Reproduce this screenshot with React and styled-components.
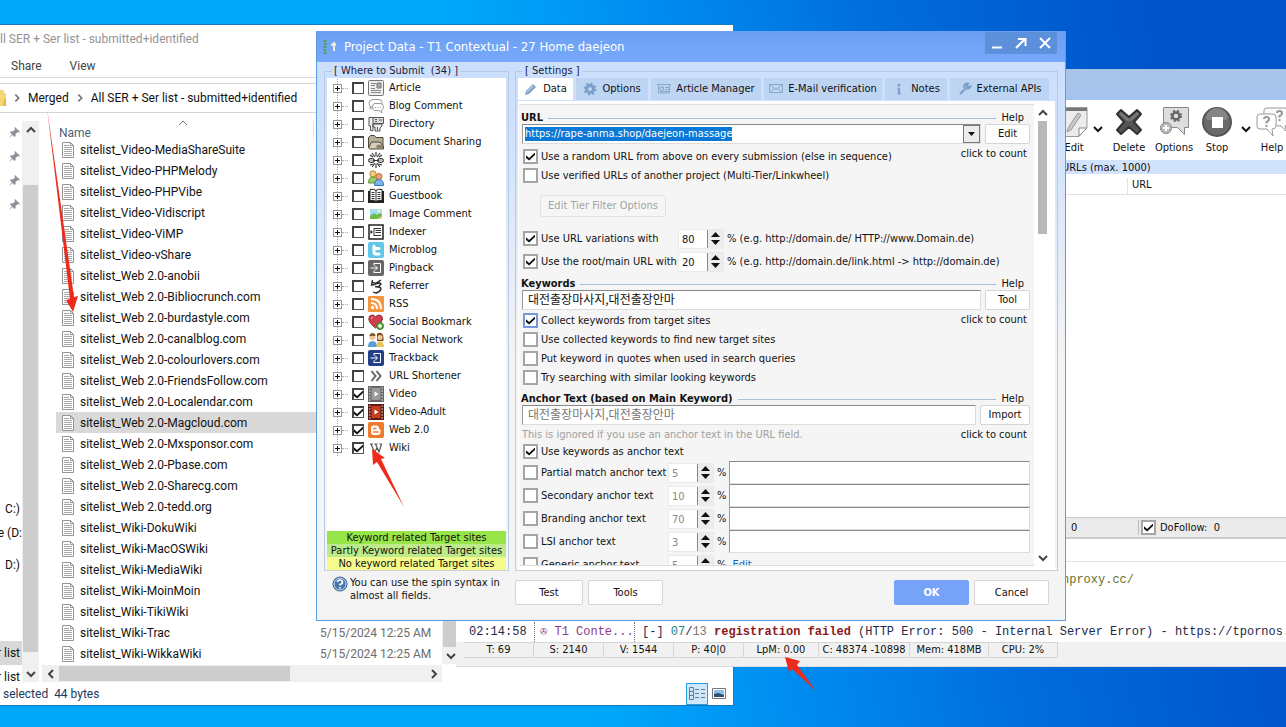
import React, { useEffect, useRef } from 'react';
import styled, { createGlobalStyle, css } from 'styled-components';

const tahoma = '"DejaVu Sans Condensed", "DejaVu Sans", "Noto Sans CJK KR", sans-serif';
const segoe = 'Roboto, "Noto Sans", sans-serif';
const mono = '"Liberation Mono", monospace';

const GlobalStyle = createGlobalStyle`
  * {
    box-sizing: border-box;
  }

  body {
    margin: 0;
    overflow: hidden;
    color: #111;
    font: 11px/14px ${tahoma};
  }

  button,
  input {
    margin: 0;
    padding: 0;
    font: inherit;
    color: inherit;
  }

  svg {
    display: block;
    flex: none;
  }
`;

const Desktop = styled.main`
  position: relative;
  height: 100vh;
  overflow: hidden;
  background: linear-gradient(78deg, #00a8fa 0%, #00a8fa 42%, #008cf0 56%, #006cdb 72%, #0052c8 92%);
`;

/* ---------- shared controls ---------- */

const Check = styled.input.attrs({ type: 'checkbox' })`
  appearance: none;
  flex: none;
  display: grid;
  place-items: center;
  width: ${({ $small }) => ($small ? 12 : 15)}px;
  height: ${({ $small }) => ($small ? 12 : 15)}px;
  background: white;
  border: ${({ $small }) => ($small ? '1px solid #555' : '2px solid #a5a5a5')};

  ${({ $small }) =>
    $small &&
    css`
      border-top: 2px solid #444;
      border-left: 2px solid #444;
    `}

  ${({ $active }) => $active && 'border-color: #7597dc;'}

  &:checked::after {
    content: '';
    width: 9px;
    height: 8px;
    background: #111;
    clip-path: polygon(0 35%, 35% 68%, 100% 0, 100% 32%, 35% 100%, 0 68%);
  }
`;

const Chevron = ({ dir = 'down', size = 12, color = '#444', weight = 2 }) => {
  const d = {
    down: 'M2 4l4 4 4-4',
    up: 'M2 8l4-4 4 4',
    left: 'M8 2L4 6l4 4',
    right: 'M4 2l4 4-4 4'
  }[dir];

  return (
    <svg width={size} height={size} viewBox="0 0 12 12" fill="none" stroke={color} strokeWidth={weight}>
      <path d={d} />
    </svg>
  );
};

const ScrollBar = styled.div`
  display: flex;
  flex-direction: ${({ $horizontal }) => ($horizontal ? 'row' : 'column')};
  align-items: center;
  flex: none;
  background: #f0f0f0;
`;

const ScrollButton = styled.button`
  display: grid;
  place-items: center;
  flex: none;
  width: 17px;
  height: 17px;
  background: none;
  border: 0;
`;

/* ---------- file explorer ---------- */

const Explorer = styled.section`
  position: absolute;
  top: 24px;
  left: 0;
  right: 552px;
  background: white;
  border-top: 1px solid #1878b8;
  border-right: 1px solid #1878b8;
  border-bottom: 1px solid #1878b8;
  font: 12px/16px ${segoe};
`;

const ExplorerTitle = styled.div`
  padding: 6px 0 5px;
  color: #949494;
`;

const RibbonTabs = styled.nav`
  display: flex;
  gap: 28px;
  height: 26px;
  padding: 6px 11px 0;
  color: #444;
  border-bottom: 1px solid #d8dce2;
`;

const RibbonTab = styled.button`
  height: 16px;
  background: none;
  border: 0;
`;

const AddressBar = styled.div`
  display: flex;
  align-items: center;
  gap: 6px;
  height: 30px;
  margin-top: 5px;
  border-top: 1px solid #d4d4d4;
  border-bottom: 1px solid #d4d4d4;
`;

const ExplorerBody = styled.div`
  display: flex;
  height: 569px;
  padding-top: 8px;
`;

const NavPane = styled.div`
  width: 22px;
  overflow: hidden;
  white-space: nowrap;
`;

const NavItem = styled.div`
  display: flex;
  align-items: center;
  justify-content: flex-end;
  height: 24px;
  margin-top: ${({ $before }) => $before || 0}px;
  padding-right: ${({ $flush }) => ($flush ? 0 : 2)}px;
  background: ${({ $active }) => ($active ? '#d9d9d9' : 'none')};
`;

const NavThumb = styled.div`
  width: 15px;
  height: 467px;
  margin: 47px 0 auto;
  background: #cdcdcd;
`;

const FilePane = styled.div`
  display: flex;
  flex-direction: column;
  width: 400px;
  margin-left: 3px;
`;

const FileHeader = styled.div`
  display: flex;
  align-items: flex-end;
  flex: none;
  height: 18px;
  width: 272px;
  padding-left: 17px;
  gap: 86px;
  color: #4c607a;
  line-height: 12px;
  border-right: 1px solid #e5e5e5;
`;

const SortMark = styled.span`
  align-self: flex-start;
  margin-top: -4px;
`;

const FileList = styled.table`
  display: block;
  flex: 1;
  border-spacing: 0;

  tbody {
    display: block;
  }
`;

const FileRow = styled.tr`
  display: flex;
  height: 21px;
  margin-left: 14px;
  background: ${({ $selected }) => ($selected ? '#d9d9d9' : 'none')};
`;

const FileName = styled.td`
  display: flex;
  align-items: center;
  gap: 6px;
  width: 264px;
  padding: 0 0 0 6px;
`;

const FileDate = styled.td`
  display: flex;
  align-items: center;
  padding: 0;
  color: #6d6d6d;
`;

const HorizontalThumb = styled.div`
  width: 231px;
  height: 15px;
  margin-right: auto;
  background: #cdcdcd;
`;

const ListThumb = styled.div`
  width: 15px;
  height: 526px;
  background: #cdcdcd;
`;

const ExplorerStatus = styled.footer`
  display: flex;
  align-items: center;
  height: 23px;
  padding: 0 3px;
  color: #1e395b;
`;

const StatusText = styled.span`
  flex: 1;
  white-space: pre;
`;

const ViewButton = styled.button`
  display: grid;
  place-items: center;
  width: 22px;
  height: 22px;
  background: ${({ $active }) => ($active ? '#cce8ff' : 'none')};
  border: ${({ $active }) => ($active ? '1px solid #26a0da' : '0')};
`;

const modified = '5/15/2024 12:25 AM';

const files = [
  ['Video-MediaShareSuite'],
  ['Video-PHPMelody'],
  ['Video-PHPVibe'],
  ['Video-Vidiscript'],
  ['Video-ViMP'],
  ['Video-vShare'],
  ['Web 2.0-anobii'],
  ['Web 2.0-Bibliocrunch.com'],
  ['Web 2.0-burdastyle.com'],
  ['Web 2.0-canalblog.com'],
  ['Web 2.0-colourlovers.com'],
  ['Web 2.0-FriendsFollow.com'],
  ['Web 2.0-Localendar.com'],
  ['Web 2.0-Magcloud.com'],
  ['Web 2.0-Mxsponsor.com'],
  ['Web 2.0-Pbase.com'],
  ['Web 2.0-Sharecg.com'],
  ['Web 2.0-tedd.org'],
  ['Wiki-DokuWiki'],
  ['Wiki-MacOSWiki'],
  ['Wiki-MediaWiki'],
  ['Wiki-MoinMoin'],
  ['Wiki-TikiWiki'],
  ['Wiki-Trac', modified],
  ['Wiki-WikkaWiki', modified]
];

const FileIcon = () => (
  <svg width="12" height="16" viewBox="0 0 12 16" fill="none">
    <path d="M.5.5h8l3 3v12H.5z" fill="#fdfdfd" stroke="#959595" />
    <path d="M8.500.5v3h3" stroke="#959595" />
    <path d="M2 3.500h5M2 5.500h8M2 7.500h8M2 9.500h8M2 11.500h8M2 13.500h8" stroke="#a8a8a8" />
  </svg>
);

const PinIcon = () => (
  <svg width="11" height="12" viewBox="0 0 11 12">
    <path d="M6 0l5 5-1.500.5-1-.3L6.500 7l.2 2-1 1L3.500 8 0 11.500 3 7.300.8 5.200l1-1 2.200.3L6 2.500 5.500 1z" fill="#8a8f98" />
  </svg>
);

const FileExplorer = () => (
  <Explorer>
    <ExplorerTitle>ll SER + Ser list - submitted+identified</ExplorerTitle>
    <RibbonTabs>
      <RibbonTab type="button">Share</RibbonTab>
      <RibbonTab type="button">View</RibbonTab>
    </RibbonTabs>
    <AddressBar>
      <svg width="6" height="16" viewBox="0 0 6 16">
        <path d="M0 0h4v3h2v13H0z" fill="#f7d774" />
        <path d="M4 9h2v7H3z" fill="#e8b93e" />
      </svg>
      <Chevron dir="right" size={10} color="#777" />
      <span>Merged</span>
      <Chevron dir="right" size={10} color="#777" />
      <span>All SER + Ser list - submitted+identified</span>
    </AddressBar>
    <ExplorerBody>
      <NavPane>
        {[0, 1, 2, 3].map(i => (
          <NavItem key={i}>
            <PinIcon />
          </NavItem>
        ))}
        <NavItem $before={280}>C:)</NavItem>
        <NavItem $flush>e (D:</NavItem>
        <NavItem $before={8}>D:)</NavItem>
        <NavItem $before={64} $active>
          r list
        </NavItem>
        <NavItem>r list</NavItem>
      </NavPane>
      <ScrollBar>
        <ScrollButton type="button" aria-label="Scroll up">
          <Chevron dir="up" />
        </ScrollButton>
        <NavThumb />
        <ScrollButton type="button" aria-label="Scroll down">
          <Chevron />
        </ScrollButton>
      </ScrollBar>
      <FilePane>
        <FileHeader>
          <span>Name</span>
          <SortMark>
            <Chevron dir="up" color="#777" weight={1} />
          </SortMark>
        </FileHeader>
        <FileList>
          <tbody>
            {files.map(([file, date]) => (
              <FileRow key={file} $selected={file === 'Web 2.0-Magcloud.com'}>
                <FileName>
                  <FileIcon />
                  sitelist_{file}
                </FileName>
                {date && <FileDate>{date}</FileDate>}
              </FileRow>
            ))}
          </tbody>
        </FileList>
        <ScrollBar $horizontal>
          <ScrollButton type="button" aria-label="Scroll left">
            <Chevron dir="left" />
          </ScrollButton>
          <HorizontalThumb />
          <ScrollButton type="button" aria-label="Scroll right">
            <Chevron dir="right" />
          </ScrollButton>
        </ScrollBar>
      </FilePane>
      <div>
        <ScrollBar>
          <ListThumb />
          <ScrollButton type="button" aria-label="Scroll list down">
            <Chevron />
          </ScrollButton>
        </ScrollBar>
      </div>
    </ExplorerBody>
    <ExplorerStatus>
      <StatusText>selected  44 bytes</StatusText>
      <ViewButton type="button" $active aria-label="Details view">
        <svg width="16" height="13" viewBox="0 0 16 13" fill="none" stroke="#777">
          <path d="M.5.500h4v12h-4zM.5 4.500h4M.5 8.500h4M6 2.500h4M12 2.500h4M6 6.500h4M12 6.500h4M6 10.500h4M12 10.500h4" />
        </svg>
      </ViewButton>
      <ViewButton type="button" aria-label="Thumbnail view">
        <svg width="14" height="11" viewBox="0 0 14 11">
          <path d="M.5.500h13v10H.5z" fill="white" stroke="#777" />
          <path d="M2 2h10v7H2z" fill="#8cc0e8" />
          <path d="M2 6l4-1 6 2v2H2z" fill="#2c4f74" />
        </svg>
      </ViewButton>
    </ExplorerStatus>
  </Explorer>
);

/* ---------- submitter main window ---------- */

const MainWindow = styled.section`
  position: absolute;
  top: 69px;
  left: 456px;
  right: 0;
  background: white;
`;

const MainTitle = styled.div`
  height: 31px;
  background: linear-gradient(#a9c3e8, #a3c4ee);
`;

const Toolbar = styled.div`
  display: flex;
  align-items: flex-start;
  height: 60px;
  padding: 6px 0 0 602px;
  overflow: hidden;
  color: #111;
`;

const ToolButton = styled.button`
  display: flex;
  flex-direction: column;
  align-items: center;
  flex: none;
  gap: 3px;
  width: ${({ $width }) => $width}px;
  background: none;
  border: 0;
`;

const ToolMore = styled.button`
  display: grid;
  justify-items: center;
  flex: none;
  width: 16px;
  padding-top: 17px;
  background: none;
  border: 0;
`;

const UrlCaption = styled.div`
  height: 14px;
  padding-left: 606px;
  line-height: 16px;
  background: #d1e2fd;
  white-space: nowrap;
`;

const UrlHead = styled.div`
  display: flex;
  height: 21px;
  padding: 4px 0 0 671px;
  border-bottom: 1px solid #e2e2e2;
`;

const UrlColumn = styled.span`
  padding-left: 4px;
  border-left: 1px solid #e2e2e2;
`;

const UrlArea = styled.div`
  height: 322px;
`;

const Counters = styled.div`
  display: flex;
  align-items: center;
  height: 22px;
  padding-left: 615px;
  background: #ebebeb;
  border-top: 1px solid #c8c8c8;
  border-bottom: 2px solid #ccc;
  white-space: pre;
`;

const CounterCell = styled.span`
  width: 67px;
`;

const FollowLabel = styled.label`
  display: flex;
  align-items: center;
  gap: 4px;
  padding-left: 2px;
  border-left: 1px solid #bbb;
`;

const LogGap = styled.div`
  height: 23px;
  border-bottom: 1px solid #e2e2e2;
`;

const Log = styled.div`
  height: 80px;
  padding-left: 8px;
  overflow: hidden;
  font: 12px/20px ${mono};
  white-space: pre;
`;

const ProxyLine = styled.div`
  height: 60px;
  padding: 8px 0 0 598px;
  color: #66702b;
`;

const LogLine = styled.div`
  display: flex;
  color: #222a4a;
`;

const LogCell = styled.span`
  flex: none;
  width: ${({ $width }) => $width}px;
  padding-left: 5px;
  border-right: 1px dotted #777;
`;

const LogText = styled.span`
  padding-left: 7px;
  overflow: hidden;
`;

const Tint = styled.span`
  color: ${({ $color }) => $color};
  font-weight: ${({ $bold }) => ($bold ? 'bold' : 'normal')};
`;

const StatusBar = styled.footer`
  display: flex;
  height: 25px;
  padding: 0 0 8px 8px;
  background: #f1f1f1;
  border-bottom: 1px solid #dcdcdc;
`;

const StatusCell = styled.span`
  width: ${({ $width }) => $width}px;
  border: solid #d6d6d6;
  border-width: 1px 1px 1px 0;
  text-align: center;
  white-space: nowrap;
`;

const statusCells = [
  ['T: 69', 70],
  ['S: 2140', 70],
  ['V: 1544', 70],
  ['P: 40|0', 70],
  ['LpM: 0.00', 75],
  ['C: 48374 -10898', 91],
  ['Mem: 418MB', 79],
  ['CPU: 2%', 69]
];

const SubmitterWindow = () => (
  <MainWindow>
    <MainTitle />
    <Toolbar>
      <ToolButton type="button" $width={32}>
        <svg width="32" height="32" viewBox="0 0 32 32" fill="none">
          <path d="M3 1.500h26v20l-8 9H3z" fill="#ececec" stroke="#999" />
          <path d="M3 3.500h26" stroke="#777" strokeWidth="3" />
          <path d="M10 22L20 7l3 2-10 15-4 2z" fill="#c8c8c8" stroke="#999" />
          <path d="M21 30v-8h8z" fill="white" stroke="#888" />
        </svg>
        Edit
      </ToolButton>
      <ToolMore type="button" aria-label="More edit actions">
        <Chevron color="#111" />
      </ToolMore>
      <ToolButton type="button" $width={46}>
        <svg width="28" height="32" viewBox="0 0 28 32">
          <path
            d="M6 4l8 7 8-7 4 4-7 8 7 8-4 4-8-7-8 7-4-4 7-8-7-8z"
            fill="#555"
            stroke="#333"
            strokeWidth="2"
            strokeLinejoin="round"
          />
          <path d="M6 6l8 7 8-7 2 2-8 7h-4L4 8z" fill="#777" />
        </svg>
        Delete
      </ToolButton>
      <ToolButton type="button" $width={44}>
        <svg width="32" height="32" viewBox="0 0 32 32" fill="none">
          <path d="M5.500 1.500h25v20h-4v7l-7-7h-14z" fill="#ddd" stroke="#888" />
          <circle cx="18" cy="10" r="3.500" stroke="#666" strokeWidth="2.500" />
          <circle cx="18" cy="10" r="5" stroke="#666" strokeWidth="2" strokeDasharray="2 2" />
          <circle cx="8" cy="22" r="5.500" fill="#bbb" stroke="#888" />
          <path d="M8 19v6M5 22h6" stroke="white" strokeWidth="2" />
        </svg>
        Options
      </ToolButton>
      <ToolButton type="button" $width={42}>
        <svg width="32" height="32" viewBox="0 0 32 32">
          <circle cx="16" cy="16" r="14" fill="#6a6a6a" stroke="#555" strokeWidth="2" />
          <path d="M5 13a11 11 0 0 1 22 0q-11 4-22 0z" fill="#858585" />
          <path d="M11 11h11v11H11z" fill="white" />
        </svg>
        Stop
      </ToolButton>
      <ToolMore type="button" aria-label="More stop actions">
        <Chevron color="#111" />
      </ToolMore>
      <ToolButton type="button" $width={36}>
        <svg width="32" height="32" viewBox="0 0 32 32" fill="none" stroke="#999">
          <path d="M8 8V4q0-2 3-2h18q3 0 3 2v12q0 4-3 4l2 6-6-6h-4z" fill="#fafafa" />
          <path d="M1 11q0-3 3-3h12q4 0 4 3v9q0 3-4 3l1 7-6-7H4q-3 0-3-3z" fill="white" />
          <path
            d="M8 13q0-2 2.500-2t2.500 2-2.500 3v1.500M10.500 19v2M21 7q0-2 2.500-2T26 7t-2.500 3v1.500M23.500 13v2"
            strokeWidth="2"
          />
        </svg>
        Help
      </ToolButton>
    </Toolbar>
    <UrlCaption>URLs (max. 1000)</UrlCaption>
    <UrlHead>
      <UrlColumn>URL</UrlColumn>
    </UrlHead>
    <UrlArea />
    <Counters>
      <CounterCell>0</CounterCell>
      <FollowLabel>
        <Check defaultChecked />
        {'DoFollow:  0'}
      </FollowLabel>
    </Counters>
    <LogGap />
    <Log>
      <ProxyLine>nproxy.cc/</ProxyLine>
      <LogLine>
        <LogCell $width={71}>02:14:58</LogCell>
        <LogCell $width={100}>
          <Tint $color="#8c3a8c">✇ T1 Conte...</Tint>
        </LogCell>
        <LogText>
          [-] <Tint $color="#1c8585">07</Tint>/<Tint $color="#777">13</Tint>{' '}
          <Tint $color="#8b1a1a" $bold>
            registration failed
          </Tint>{' '}
          (HTTP Error: 500 - Internal Server Error) - https://tpornos.fun
        </LogText>
      </LogLine>
    </Log>
    <StatusBar>
      {statusCells.map(([text, width]) => (
        <StatusCell key={text} $width={width}>
          {text}
        </StatusCell>
      ))}
    </StatusBar>
  </MainWindow>
);

/* ---------- project dialog ---------- */

const Dialog = styled.section`
  position: absolute;
  top: 31px;
  left: 316px;
  right: 220px;
  background: linear-gradient(#c9ddfd 0, #cfe1fc 90px, #f4f4f4 330px);
  border: 1px solid #5b9ee0;
  border-top: 0;
`;

const DialogTitle = styled.header`
  display: flex;
  align-items: center;
  gap: 8px;
  height: 31px;
  padding: 0 8px 0 6px;
  color: white;
  background: linear-gradient(#6c9ff2, #77a8fb);
`;

const DialogName = styled.h1`
  flex: 1;
  margin: 0;
  font: 13px/16px ${tahoma};
`;

const WindowButtons = styled.div`
  display: flex;
  align-self: flex-start;
  margin-top: 1px;
  background: #5c90da;
`;

const WindowButton = styled.button`
  display: grid;
  place-items: center;
  width: 24px;
  height: 22px;
  background: none;
  border: 0;
`;

const DialogBody = styled.div`
  display: grid;
  grid-template-columns: 185px 1fr;
  gap: 6px;
  padding: 2px 7px 0;
`;

const Group = styled.fieldset`
  display: flex;
  flex-direction: column;
  min-width: 0;
  margin: 0;
  padding: 0 2px;
  border: 1px solid #b9cbe4;
  border-bottom-color: #d0d0d0;
`;

const Legend = styled.legend`
  height: 14px;
  margin-left: 5px;
  padding: 0 2px;
  color: #1a1a3a;
  white-space: pre;
`;

const Tree = styled.ul`
  flex: 1;
  margin: 0;
  padding: 1px 0 0 6px;
  list-style: none;
  background: white;
`;

const TreeItem = styled.li`
  display: flex;
  align-items: center;
  height: 18px;
`;

const TreeLine = styled.span`
  display: flex;
  align-items: center;
  flex: none;
  width: 19px;
  height: 18px;
  background: repeating-linear-gradient(#aaa 0 1px, transparent 1px 2px) 4px 0 / 1px 100% no-repeat;

  &::after {
    content: '';
    width: 6px;
    border-top: 1px dotted #aaa;
  }
`;

const Expander = styled.button`
  display: grid;
  place-items: center;
  width: 9px;
  height: 9px;
  background: white;
  border: 1px solid #999;
`;

const TreeLabel = styled.label`
  display: flex;
  align-items: center;
  gap: 4px;
`;

const TreeName = styled.span`
  margin-left: 1px;
`;

const Relevance = styled.div`
  height: 13px;
  line-height: 13px;
  text-align: center;
  white-space: nowrap;
  background: ${({ $color }) => $color};
`;

const i = (children, props) => (
  <svg width="16" height="16" viewBox="0 0 16 16" fill="none" {...props}>
    {children}
  </svg>
);

const arrowBox = color =>
  i(
    <>
      <rect width="16" height="16" rx="2" fill={color} />
      <path d="M6 3.500h6.500v9H6M6 3v2.500M6 10.500V13M2.500 8H9M7 5.500L9.500 8 7 10.500" stroke="white" />
    </>
  );

const film = (frame, screen) =>
  i(
    <>
      <path d="M0 0h16v16H0z" fill={frame} />
      <path d="M3.500 2h9v12h-9z" fill={screen} />
      <path d="M1 2h1.500M1 5h1.500M1 8h1.500M1 11h1.500M1 14h1.500M13.500 2H15M13.500 5H15M13.500 8H15M13.500 11H15M13.500 14H15" stroke="#eee" />
      <path d="M6.500 5.500v5l4-2.500z" fill="#fff" />
    </>
  );

const sites = [
  [
    'Article',
    i(
      <>
        <rect x=".5" y=".5" width="15" height="15" rx="1" fill="#eee" stroke="#777" />
        <path d="M3 3.500h5M3 5.500h4M3 10.500h10M3 12.500h10M3 8.500h4" stroke="#888" />
        <path d="M9 3h4v5H9z" fill="#aaa" stroke="#777" />
      </>
    )
  ],
  [
    'Blog Comment',
    i(
      <g fill="white" stroke="#999">
        <path d="M5 1.500h6q3 0 3 3v2q0 3-3 3H5q-4 0-4-4t4-4zM2.500 8L2 11l3-2" />
        <path d="M7 5.500h5q3.500 0 3.500 3.500 0 2-2 3l.5 3-3-2.500H7Q4.500 12.500 4.500 9T7 5.500z" />
        <path d="M7 9.500h1M9.500 9.500h1M12 9.500h1" />
      </g>
    )
  ],
  [
    'Directory',
    i(
      <g stroke="#555">
        <path d="M3.500 1.500h12v6h-12z" fill="#ddd" />
        <path d="M1 1.500h4v13H2.500V10H1zM5 8h9v2l-2 2v3H7v-4H5z" fill="#eee" />
        <path d="M7 3.500h2M7 5.500h2M11 4h3M9.500 11v3" />
      </g>
    )
  ],
  [
    'Document Sharing',
    i(
      <>
        <path d="M.5 3.500l2-2h4l1.500 2h7v10H.5z" fill="#b8b096" stroke="#4a4638" />
        <path d="M.5 14l3-6H12l3.500 4.500V15H2z" fill="#d5cfb9" stroke="#4a4638" />
        <path d="M8 12q4-3 7 .5v2H9z" fill="#8b8168" />
      </>
    )
  ],
  [
    'Exploit',
    i(
      <g stroke="#333">
        <rect x=".5" y="6.500" width="6" height="4" rx="2" fill="#bbb" />
        <rect x="9.500" y="6.500" width="6" height="4" rx="2" fill="#bbb" />
        <path d="M5 8.500h6" />
        <path d="M4 1l3 4M12 1L9 5M8 0v4M4 15l3-4M12 15l-3-4M8 12v4M2 3l3 2M14 3l-3 2M2 13l3-1M14 13l-3-1" strokeWidth="1.200" />
      </g>
    )
  ],
  [
    'Forum',
    i(
      <>
        <circle cx="5" cy="4" r="3.200" fill="#f3ca82" stroke="#b98a3d" />
        <path d="M.5 13q0-6 4.500-6t4 6z" fill="#9ccb66" stroke="#5f963a" />
        <circle cx="11" cy="6.500" r="3" fill="#f0a070" stroke="#bb6f3c" />
        <path d="M6.500 15.500q0-6 4.500-6t4.500 6z" fill="#7db5ea" stroke="#3878bb" />
      </>
    )
  ],
  [
    'Guestbook',
    i(
      <>
        <path d="M0 3h16v12H0z" fill="#222" />
        <path d="M2 1.500q4-1 6 1 2-2 6-1v11q-4-1-6 1-2-2-6-1z" fill="white" stroke="#222" />
        <path d="M8 2v11.500M3.500 4.500h3M3.500 6.500h3M3.500 8.500h3M3.500 10.500h3M9.500 4.500h3M9.500 6.500h3M9.500 8.500h3M9.500 10.500h3" stroke="#333" />
      </>
    )
  ],
  [
    'Image Comment',
    i(
      <>
        <path d="M2 3h12v10H2z" fill="#a7dcf5" />
        <path d="M2 10l4-3 3 2 3-2 2 2v4H2z" fill="#6dbb4c" />
        <circle cx="11" cy="5" r="1.500" fill="#fff4a8" />
        <path d="M9 13h5v-3z" fill="#f3d264" />
      </>
    )
  ],
  [
    'Indexer',
    i(
      <>
        <path d="M1 1h14v14H1z" fill="white" stroke="#222" strokeWidth="1.500" />
        <path d="M6 4.500h7M7.500 6.500H13M7.500 8.500H13M6 11.500h7M6 4v8" stroke="#333" />
        <path d="M2.500 6v4l2.500-2z" fill="#222" />
      </>
    )
  ],
  [
    'Microblog',
    i(
      <>
        <rect width="16" height="16" rx="2" fill="#62c6e8" />
        <path d="M6 4v6q0 2 2 2h3M6 6.500h5" stroke="white" strokeWidth="3" strokeLinecap="round" />
      </>
    )
  ],
  ['Pingback', arrowBox('#686868')],
  [
    'Referrer',
    i(
      <path
        d="M4.500 2l-1 5q4 0 5-2l4.500-3M8 6q4-2 5 0l-3 3q3 0 3 2-1 3-5 4l-3-1M3.500 3.500q2 2 5 1.500M10 9l-3-.5"
        stroke="#222"
        strokeWidth="1.300"
      />
    )
  ],
  [
    'RSS',
    i(
      <>
        <rect width="16" height="16" rx="1" fill="#f4953f" />
        <path d="M3 3q10 0 10 10M3 7q6 0 6 6" stroke="#fff" strokeWidth="2" />
        <circle cx="4.500" cy="11.500" r="1.700" fill="#fff" />
      </>
    )
  ],
  [
    'Social Bookmark',
    i(
      <>
        <path d="M7.500 14Q1 9 .8 5q0-4 3.500-4 2 0 3.200 2Q9 1 11 1q3.500 0 3.500 4-.5 4-7 9z" fill="#d0404a" stroke="#8f2530" />
        <path d="M3 5q0-2 2-2" stroke="#f1a0a4" />
        <circle cx="12" cy="12" r="3.500" fill="#5fab43" stroke="#3f7b2b" />
        <path d="M12 10v4M10 12h4" stroke="#fff" strokeWidth="1.400" />
      </>
    )
  ],
  [
    'Social Network',
    i(
      <>
        <path d="M9 2q1-2 4-1 3 1 2.500 8L9 9z" fill="#7d4b22" />
        <circle cx="12" cy="5.500" r="2.500" fill="#f4c9a0" />
        <circle cx="4.500" cy="5" r="3" fill="#f1c497" />
        <path d="M1.500 4q0-3 3-3t3 3z" fill="#8a5a28" />
        <path d="M0 15q0-6 4.500-6T9 15z" fill="#5e9cd8" />
        <path d="M8.500 15q0-6 3.500-6t4 6z" fill="#edc45a" />
      </>
    )
  ],
  ['Trackback', arrowBox('#233f8a')],
  ['URL Shortener', i(<path d="M3.500 3l4 5-4 5M8.500 3l4 5-4 5" stroke="#666" strokeWidth="2" />)],
  ['Video', film('#666', '#999'), true],
  ['Video-Adult', film('#5e1a12', '#c4401f'), true],
  [
    'Web 2.0',
    i(
      <>
        <rect width="16" height="16" rx="2" fill="#ee7a2c" />
        <path d="M5 3.500h3q3 0 3 3l1.500 1.500v2q0 3-3 3H6q-3 0-3-3V6q0-2.500 2-2.500z" fill="#fff" />
        <path d="M5.500 6.500H8M5.500 10H10" stroke="#ee7a2c" strokeWidth="1.500" strokeLinecap="round" />
      </>
    ),
    true
  ],
  [
    'Wiki',
    i(
      <path d="M2 4h3M6.500 4h3M11.500 4H14M3 4l3.500 8L9 8M7.500 4l3.500 8 2.500-8" stroke="#555" strokeWidth="1.200" />
    ),
    true
  ]
];

const TabBar = styled.div`
  display: flex;
  gap: 3px;
  height: 23px;
  padding-bottom: 1px;
`;

const Tab = styled.button`
  display: flex;
  align-items: center;
  justify-content: center;
  flex: 0 1 ${({ $width }) => $width}px;
  gap: 5px;
  height: 22px;
  white-space: nowrap;
  background: ${({ $active }) => ($active ? 'white' : '#bdd4f3')};
  border: 0;
`;

const tabs = [
  [
    'Data',
    55,
    <>
      <path d="M1 13l1-4 7-7 3 3-7 7z" fill="#7fa5cc" />
      <path d="M3 10l6-6" stroke="#cfe0f0" />
    </>
  ],
  [
    'Options',
    72,
    <>
      <circle cx="7" cy="7" r="3.500" stroke="#7b9fc8" strokeWidth="3" />
      <circle cx="7" cy="7" r="5.500" stroke="#7b9fc8" strokeWidth="2" strokeDasharray="2 2.300" />
    </>
  ],
  [
    'Article Manager',
    110,
    <path d="M0 2.500h14M1.500 2v9h11V2M3 5h3.500v3H3zM8 5.500h4M8 7.500h4M3 9.500h9" stroke="#86a8cf" />
  ],
  [
    'E-Mail verification',
    118,
    <path d="M.5 2.500h13v8H.5zl6.500 5 6.500-5M.5 10.500L5 6.500M13.500 10.500L9 6.500" stroke="#86a8cf" />
  ],
  [
    'Notes',
    62,
    <>
      <circle cx="7" cy="3" r="1.500" fill="#7b9fc8" />
      <path d="M7 6v6M5.500 6.500H7M5.500 11.500h3" stroke="#7b9fc8" strokeWidth="2" />
    </>
  ],
  [
    'External APIs',
    99,
    <path d="M2 12l5-5M12.500 4.500Q11 7 8.500 6.500 5 5.500 6.500 3 8 1 10 1.500L8.500 3.500l1.500 1.500z" stroke="#7b9fc8" strokeWidth="2" />
  ]
];

const Panel = styled.div`
  display: flex;
  height: 469px;
  padding: 3px 4px 4px 1px;
  background: white;
`;

const Form = styled.form`
  flex: 1;
  min-width: 0;
  padding: 7px 4px 0 3px;
  overflow: hidden;
  background: #f5f5f5;
  border-top: 1px solid #ddd;
  border-bottom: 1px solid #ddd;
`;

const FormScroll = styled(ScrollBar)`
  width: 17px;
  background: white;
`;

const FormThumb = styled.div`
  width: 9px;
  height: 113px;
  margin-bottom: auto;
  background: #b8b8b8;
`;

const SectionHead = styled.div`
  display: flex;
  align-items: center;
  gap: 5px;
  height: 12px;
  margin-top: ${({ $before }) => $before || 0}px;
  padding-right: 6px;

  &::before {
    content: '';
    order: 1;
    flex: 1;
    border-top: 1px solid #a9c0da;
  }
`;

const SectionTitle = styled.strong`
  margin-left: -1px;
`;

const Help = styled.a`
  order: 2;
  color: inherit;
  text-decoration: none;
`;

const FieldRow = styled.div`
  display: flex;
  gap: 4px;
  height: 20px;
`;

const field = css`
  min-width: 0;
  background: white;
  border: 1px solid #ddd;
  border-top-color: #888;
  border-left-color: #999;
  border-radius: 0;
  outline: 0;
`;

const TextField = styled.input`
  ${field}
  flex: 1;
  padding: 0 5px 3px;
  color: ${({ $muted }) => ($muted ? '#777' : '#111')};
  font: 12px/14px "Noto Sans CJK KR", sans-serif;
`;

const Combo = styled.div`
  ${field}
  display: flex;
  flex: 1;
`;

const ComboInput = styled.input`
  flex: 1;
  min-width: 0;
  padding: 0 2px;
  border: 0;
  outline: 0;

  &::selection {
    color: white;
    background: #0a78d7;
  }
`;

const ComboArrow = styled.button`
  display: grid;
  place-items: center;
  width: 17px;
  background: #ececec;
  border: 1px solid #777;
`;

const Button = styled.button`
  flex: none;
  width: ${({ $width }) => $width}px;
  height: ${({ $height }) => $height || 20}px;
  margin: ${({ $margin }) => $margin || 0};
  color: ${({ $primary }) => ($primary ? 'white' : '#111')};
  font-weight: ${({ $primary }) => ($primary ? 'bold' : 'normal')};
  background: ${({ $primary }) => ($primary ? '#76a2f7' : 'white')};
  border: 1px solid ${({ $primary }) => ($primary ? '#76a2f7' : '#d5d5d5')};
  border-radius: 2px;

  &:disabled {
    color: #a3a3a3;
    background: #f6f6f6;
    border-color: #e2e2e2;
  }
`;

const Split = styled.div`
  display: flex;
  align-items: flex-start;
  justify-content: space-between;
  padding: ${({ $top }) => $top}px 3px 0 0;
`;

const CountLink = styled.a`
  margin-top: ${({ $before }) => $before || 0}px;
  color: inherit;
  text-decoration: none;
`;

const CheckLabel = styled.label`
  display: flex;
  align-items: center;
  flex: none;
  gap: 3px;
  height: 19px;
  padding-left: 1px;
  white-space: nowrap;
  width: ${({ $width }) => ($width ? `${$width}px` : 'auto')};
`;

const SpinRow = styled.div`
  display: flex;
  align-items: center;
  gap: 3px;
  height: 23px;
`;

const SpinBox = styled.span`
  display: flex;
  flex: none;
  width: 46px;
  height: 20px;
  background: white;
  border: 1px solid #eaeaea;
  color: ${({ $muted }) => ($muted ? '#888' : '#111')};
`;

const SpinInput = styled.input`
  width: 29px;
  padding: 2px 0 0 3px;
  background: none;
  border: 0;
  border-right: 1px solid #888;
`;

const SpinButtons = styled.span`
  display: flex;
  flex-direction: column;
  flex: 1;
  justify-content: center;
  gap: 3px;
  background: #ececec;
`;

const SpinButton = styled.button`
  height: 5px;
  width: 9px;
  margin-left: 3px;
  background: #111;
  border: 0;
  clip-path: ${({ $up }) => ($up ? 'polygon(50% 0, 100% 100%, 0 100%)' : 'polygon(0 0, 100% 0, 50% 100%)')};
`;

const AnchorField = styled.input`
  ${field}
  flex: 1;
  align-self: stretch;
`;

const Note = styled.span`
  color: #a0a0a0;
`;

const Spin = ({ value, label, muted }) => (
  <SpinBox $muted={muted}>
    <SpinInput defaultValue={value} aria-label={label} />
    <SpinButtons>
      <SpinButton type="button" $up aria-label={`Increase ${label}`} />
      <SpinButton type="button" aria-label={`Decrease ${label}`} />
    </SpinButtons>
  </SpinBox>
);

const CheckRow = ({ children, width, ...props }) => (
  <CheckLabel $width={width}>
    <Check {...props} />
    {children}
  </CheckLabel>
);

const Section = ({ title, before }) => (
  <SectionHead $before={before}>
    <SectionTitle>{title}</SectionTitle>
    <Help href="#help">Help</Help>
  </SectionHead>
);

const keywords = '대전출장마사지,대전출장안마';

const anchors = [
  ['Partial match', '5'],
  ['Secondary', '10'],
  ['Branding', '70'],
  ['LSI', '3']
];

const EditLink = styled.a`
  padding-left: 3px;
  color: #0a6cc4;
  text-decoration: none;
`;

const DataForm = () => {
  const url = useRef(null);

  useEffect(() => {
    url.current.focus();
    url.current.select();
  }, []);

  return (
    <Form>
      <Section title="URL" />
      <FieldRow>
        <Combo>
          <ComboInput ref={url} defaultValue="https://rape-anma.shop/daejeon-massage" aria-label="URL" />
          <ComboArrow type="button" aria-label="Show URLs">
            <svg width="7" height="4" viewBox="0 0 7 4">
              <path d="M0 0h7L3.500 4z" fill="#111" />
            </svg>
          </ComboArrow>
        </Combo>
        <Button type="button" $width={45}>
          Edit
        </Button>
      </FieldRow>
      <Split $top={3}>
        <div>
          <CheckRow defaultChecked>Use a random URL from above on every submission (else in sequence)</CheckRow>
          <CheckRow>Use verified URLs of another project (Multi-Tier/Linkwheel)</CheckRow>
        </div>
        <CountLink href="#count">click to count</CountLink>
      </Split>
      <Button type="button" disabled $width={126} $height={22} $margin="10px 0 10px 18px">
        Edit Tier Filter Options
      </Button>
      <SpinRow>
        <CheckRow defaultChecked width={153}>
          Use URL variations with
        </CheckRow>
        <Spin value="80" label="URL variations percentage" />
        <span>% (e.g. http://domain.de/ HTTP://www.Domain.de)</span>
      </SpinRow>
      <SpinRow>
        <CheckRow defaultChecked width={153}>
          Use the root/main URL with
        </CheckRow>
        <Spin value="20" label="root URL percentage" />
        <span>% (e.g. http://domain.de/link.html -&gt; http://domain.de)</span>
      </SpinRow>

      <Section title="Keywords" before={5} />
      <FieldRow>
        <TextField defaultValue={keywords} aria-label="Keywords" />
        <Button type="button" $width={45}>
          Tool
        </Button>
      </FieldRow>
      <Split $top={1}>
        <div>
          <CheckRow defaultChecked $active>
            Collect keywords from target sites
          </CheckRow>
          <CheckRow>Use collected keywords to find new target sites</CheckRow>
          <CheckRow>Put keyword in quotes when used in search queries</CheckRow>
          <CheckRow>Try searching with similar looking keywords</CheckRow>
        </div>
        <CountLink href="#count" $before={2}>
          click to count
        </CountLink>
      </Split>

      <Section title="Anchor Text (based on Main Keyword)" before={6} />
      <FieldRow>
        <TextField defaultValue={keywords} aria-label="Anchor text" $muted />
        <Button type="button" $width={50}>
          Import
        </Button>
      </FieldRow>
      <Split $top={3}>
        <Note>This is ignored if you use an anchor text in the URL field.</Note>
        <CountLink href="#count">click to count</CountLink>
      </Split>
      <CheckRow defaultChecked>Use keywords as anchor text</CheckRow>
      {anchors.map(([name, value]) => (
        <SpinRow key={name}>
          <CheckRow width={143}>{name} anchor text</CheckRow>
          <Spin value={value} label={`${name} percentage`} muted />
          <span>%</span>
          <AnchorField aria-label={`${name} anchor text`} />
        </SpinRow>
      ))}
      <SpinRow>
        <CheckRow width={143}>Generic anchor text</CheckRow>
        <Spin value="5" label="Generic percentage" muted />
        <span>%</span>
        <EditLink href="#edit">Edit</EditLink>
      </SpinRow>
    </Form>
  );
};

const DialogFooter = styled.footer`
  display: grid;
  grid-template-columns: 185px 1fr;
  gap: 6px;
  height: 49px;
  padding: 5px 8px 0 7px;
`;

const Tip = styled.div`
  display: flex;
  gap: 2px;
  padding-left: 8px;
  line-height: 13px;
`;

const Actions = styled.div`
  display: flex;
  gap: 5px;
  padding: 4px 8px 0 0;
`;

const ProjectDialog = () => (
  <Dialog>
    <DialogTitle>
      <svg width="13" height="14" viewBox="0 0 13 14" fill="none">
        <path d="M2 0v14" stroke="#4da35c" strokeWidth="3" strokeDasharray="2 1" />
        <path d="M11 11V3M8.500 5.500L11 3l2 2.500" stroke="#f4ead8" strokeWidth="2" />
      </svg>
      <DialogName>Project Data - T1 Contextual - 27 Home daejeon</DialogName>
      <WindowButtons>
        <WindowButton type="button" aria-label="Minimize">
          <svg width="12" height="12" viewBox="0 0 12 12" stroke="white" strokeWidth="2">
            <path d="M1 10.500h10" />
          </svg>
        </WindowButton>
        <WindowButton type="button" aria-label="Maximize">
          <svg width="12" height="12" viewBox="0 0 12 12" fill="none" stroke="white" strokeWidth="2">
            <path d="M1 11l9-9M3 2h7.500v7" />
          </svg>
        </WindowButton>
        <WindowButton type="button" aria-label="Close">
          <svg width="12" height="12" viewBox="0 0 12 12" stroke="white" strokeWidth="2">
            <path d="M1 1l10 10M11 1L1 11" />
          </svg>
        </WindowButton>
      </WindowButtons>
    </DialogTitle>
    <DialogBody>
      <Group>
        <Legend>{'[ Where to Submit  (34) ]'}</Legend>
        <Tree>
          {sites.map(([name, icon, checked]) => (
            <TreeItem key={name}>
              <TreeLine>
                <Expander type="button" aria-label={`Expand ${name}`}>
                  <svg width="5" height="5" viewBox="0 0 5 5" stroke="#111">
                    <path d="M0 2.500h5M2.500 0v5" />
                  </svg>
                </Expander>
              </TreeLine>
              <TreeLabel>
                <Check $small defaultChecked={checked} />
                {icon}
                <TreeName>{name}</TreeName>
              </TreeLabel>
            </TreeItem>
          ))}
        </Tree>
        <Relevance $color="#98e54a">Keyword related Target sites</Relevance>
        <Relevance $color="#bdeb8b">Partly Keyword related Target sites</Relevance>
        <Relevance $color="#f4fa8c">No keyword related Target sites</Relevance>
      </Group>
      <Group>
        <Legend>[ Settings ]</Legend>
        <TabBar>
          {tabs.map(([name, width, icon], index) => (
            <Tab key={name} type="button" $width={width} $active={index === 0}>
              <svg width="14" height="14" viewBox="0 0 14 14" fill="none">
                {icon}
              </svg>
              {name}
            </Tab>
          ))}
        </TabBar>
        <Panel>
          <DataForm />
          <FormScroll>
            <ScrollButton type="button" aria-label="Scroll form up">
              <Chevron dir="up" />
            </ScrollButton>
            <FormThumb />
            <ScrollButton type="button" aria-label="Scroll form down">
              <Chevron />
            </ScrollButton>
          </FormScroll>
        </Panel>
      </Group>
    </DialogBody>
    <DialogFooter>
      <Tip>
        <svg width="16" height="16" viewBox="0 0 16 16" fill="none">
          <circle cx="8" cy="8" r="7" fill="#4a78ae" stroke="#2e5c94" />
          <circle cx="8" cy="8" r="6" stroke="#c8daee" />
          <path d="M5.500 6q0-2 2.500-2t2.500 2T8 8.500v1M8 11v1.500" stroke="white" strokeWidth="1.600" />
        </svg>
        <span>
          You can use the spin syntax in
          <br />
          almost all fields.
        </span>
      </Tip>
      <Actions>
        <Button type="button" $width={68} $height={25}>
          Test
        </Button>
        <Button type="button" $width={75} $height={25}>
          Tools
        </Button>
        <Button type="button" $width={75} $height={25} $primary $margin="0 0 0 auto">
          OK
        </Button>
        <Button type="button" $width={75} $height={25}>
          Cancel
        </Button>
      </Actions>
    </DialogFooter>
  </Dialog>
);

/* ---------- hand-drawn pointers over the windows ---------- */

const Pointer = styled.svg`
  position: absolute;
  top: ${({ $top }) => $top}px;
  left: ${({ $left }) => $left}px;
  pointer-events: none;
`;

const App = () => (
  <>
    <GlobalStyle />
    <Desktop>
      <FileExplorer />
      <SubmitterWindow />
      <ProjectDialog />
      <Pointer $left={46} $top={108} width="36" height="206" viewBox="0 0 36 206" fill="#ee2a1c">
        <path d="M1 0l27 189 4-1-5 16-7-12 4-1z" />
      </Pointer>
      <Pointer $left={371} $top={448} width="36" height="60" viewBox="0 0 36 60" fill="#ee2a1c">
        <path d="M1 1l13 9-4 1 23 48L6 14l-4 3z" />
      </Pointer>
      <Pointer $left={784} $top={656} width="34" height="36" viewBox="0 0 34 36" fill="#ee2a1c">
        <path d="M1 1l15 4-3 4 19 26L8 13l-3 3z" />
      </Pointer>
    </Desktop>
  </>
);

export default App;
